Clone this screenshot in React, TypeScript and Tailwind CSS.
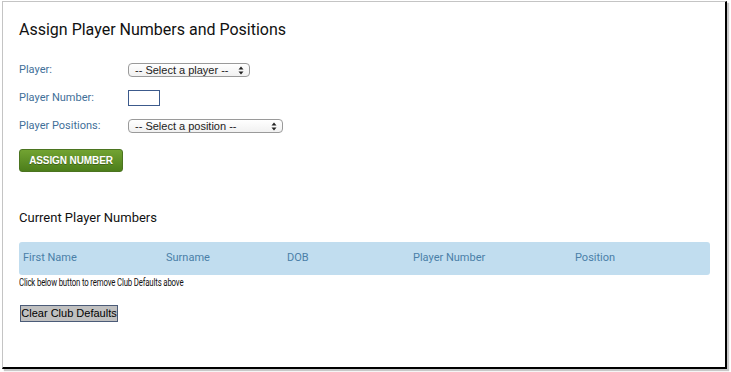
import { ReactNode } from 'react'

const din = "font-['Roboto','Liberation_Sans',sans-serif]"
const helv = "font-['Liberation_Sans','Arial',sans-serif]"

function SelectArrows() {
  return (
    <svg width="6" height="9" viewBox="0 0 6 9" className="shrink-0">
      <path d="M3 0.5 L5.5 3.5 H0.5 Z" fill="#222" />
      <path d="M3 8.5 L5.5 5.5 H0.5 Z" fill="#222" />
    </svg>
  )
}

function FakeSelect({ label, width }: { label: string; width: string }) {
  return (
    <div
      className={`${width} h-[14px] flex items-center justify-between pl-[6px] pr-[5px] rounded-[4px] border border-[#9a9a9a] bg-gradient-to-b from-white to-[#f1f1f1] ${helv} text-[11px] text-[#222] leading-none`}
    >
      <span>{label}</span>
      <SelectArrows />
    </div>
  )
}

function FormRow({ label, children }: { label: string; children: ReactNode }) {
  return (
    <div className="h-[28px] flex items-center">
      <div className={`w-[109px] ${din} text-[11px] text-[#3f6f99]`}>{label}</div>
      {children}
    </div>
  )
}

const columns = [
  { name: 'First Name', width: 'w-[143px]' },
  { name: 'Surname', width: 'w-[121px]' },
  { name: 'DOB', width: 'w-[126px]' },
  { name: 'Player Number', width: 'w-[162px]' },
  { name: 'Position', width: 'flex-1' },
]

export default function App() {
  return (
    <div className="w-[731px] h-[372px] bg-white pt-px pl-[2px]">
      <div className="w-[725px] h-[368px] border-t border-l border-[#c4c4c4] border-r-2 border-b-2 border-r-black border-b-black shadow-[2px_2px_1px_#c8c8c8] pl-[16px] pr-[15px] pt-[18px]">
        <h1 className={`${din} text-[16px] leading-[20px] text-[#111]`}>
          Assign Player Numbers and Positions
        </h1>

        <div className="mt-[16px]">
          <FormRow label="Player:">
            <FakeSelect label="-- Select a player --" width="w-[122px]" />
          </FormRow>
          <FormRow label="Player Number:">
            <div className="w-[32px] h-[16px] border border-[#3c5a8c] bg-white" />
          </FormRow>
          <FormRow label="Player Positions:">
            <FakeSelect label="-- Select a position --" width="w-[155px]" />
          </FormRow>
        </div>

        <button
          type="button"
          className={`mt-[9px] w-[104px] h-[23px] rounded-[3px] border border-[#4b7420] bg-gradient-to-b from-[#72a332] to-[#4c7e1b] text-white ${helv} font-bold text-[10px] tracking-[-0.1px] [text-shadow:0_1px_0_rgba(0,0,0,0.3)]`}
        >
          ASSIGN NUMBER
        </button>

        <h2 className={`mt-[38px] ${din} text-[13px] leading-[16px] text-[#111]`}>
          Current Player Numbers
        </h2>

        <div className="mt-[16px] h-[33px] rounded-[3px] bg-[#c1ddef] flex items-center pl-[4px]">
          {columns.map((col) => (
            <div key={col.name} className={`${col.width} ${din} text-[11px] text-[#4a7fa8]`}>
              {col.name}
            </div>
          ))}
        </div>

        <p className={`mt-[2px] ${din} text-[10px] leading-[12px] tracking-[-0.2px] text-[#111]`}>
          <span className="inline-block origin-left scale-x-[0.78]">
            Click below button to remove Club Defaults above
          </span>
        </p>

        <button
          type="button"
          className={`mt-[16px] ml-px w-[98px] h-[17px] bg-[#c0c0c0] border border-[#4b5b78] ${helv} text-[11px] leading-none text-black`}
        >
          Clear Club Defaults
        </button>
      </div>
    </div>
  )
}
